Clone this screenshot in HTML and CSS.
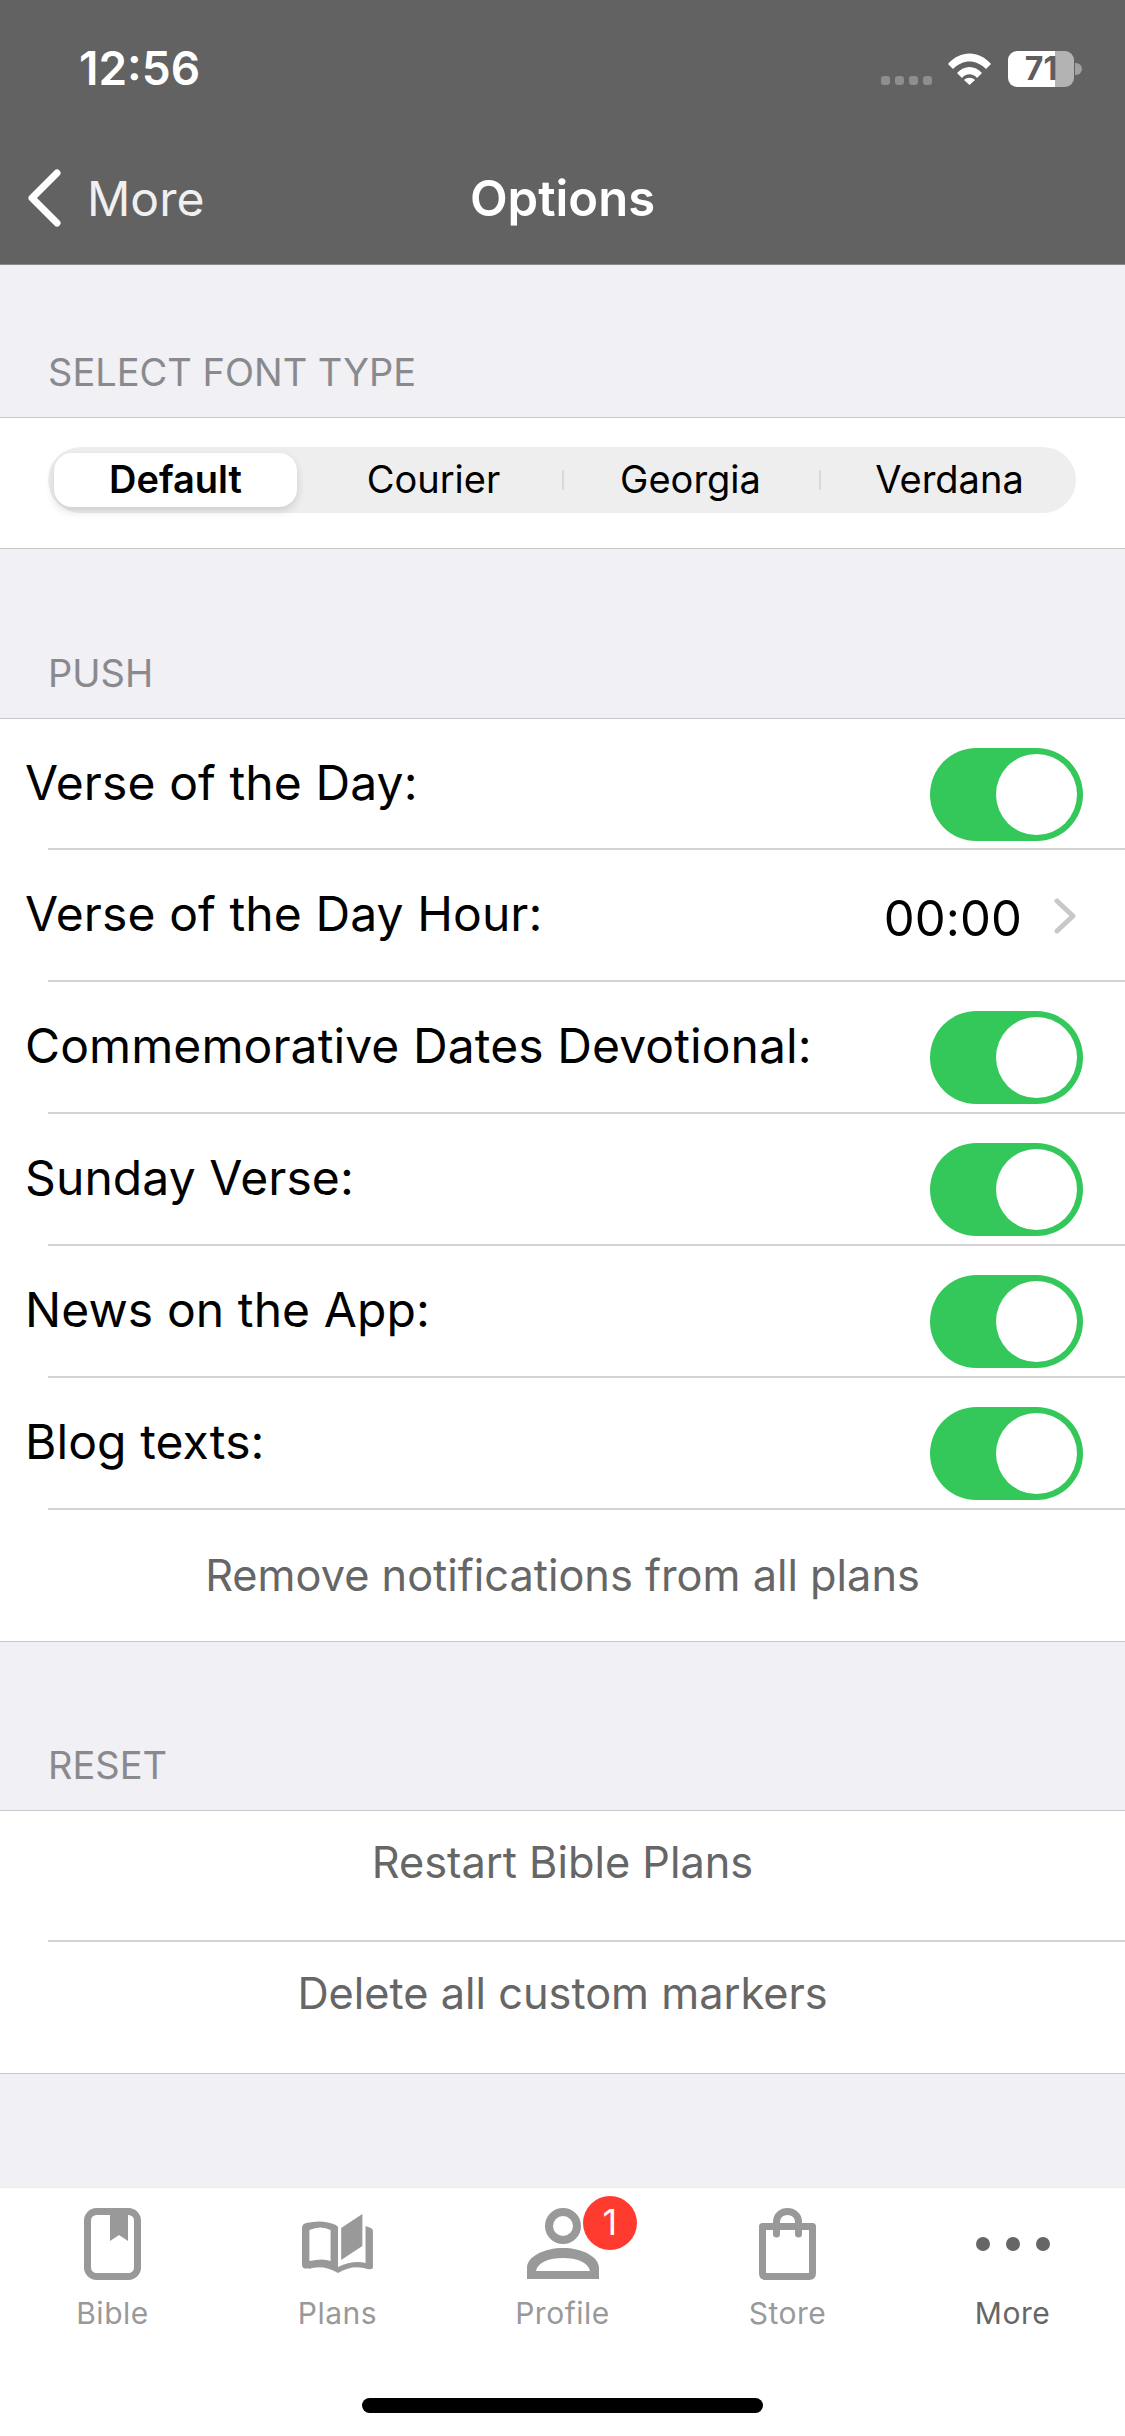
FILE: index.html
```html
<!DOCTYPE html>
<html lang="en">
<head>
    <meta charset="utf-8" />
    <title>Options</title>
    <link rel="stylesheet" href="styles.css">
</head>
<body>
    <div class="page">
        <header class="top">
            <div class="status-bar">
                <span class="clock">12:56</span>
                <div class="status-icons">
                    <div class="signal"><i></i><i></i><i></i><i></i></div>
                    <svg class="wifi" viewBox="0 0 45 33">
                        <path d="M1 12 C13 -2 32 -2 44 12 L39 17 C29 7 16 7 6 17 Z" fill="#fff"/>
                        <path d="M10 21 C17 13 28 13 35 21 L30 26 C26 21 19 21 15 26 Z" fill="#fff"/>
                        <path d="M17 28 C20 25 25 25 28 28 L22.500 33 Z" fill="#fff"/>
                    </svg>
                    <div class="battery"><span>71</span></div>
                    <div class="battery-nub"></div>
                </div>
            </div>
            <nav class="nav-bar">
                <div class="back">
                    <svg class="back-icon" viewBox="0 0 36 58"><path d="M31 4 L6 29 L31 54" fill="none" stroke="#fff" stroke-width="7" stroke-linecap="round" stroke-linejoin="round"/></svg>
                    <span>More</span>
                </div>
                <h1>Options</h1>
            </nav>
        </header>

        <main>
            <h2 class="section-title first">SELECT FONT TYPE</h2>
            <section class="group font-group">
                <div class="segments">
                    <div class="segment selected">Default</div>
                    <div class="segment">Courier</div>
                    <div class="segment divided">Georgia</div>
                    <div class="segment divided">Verdana</div>
                </div>
            </section>

            <h2 class="section-title">PUSH</h2>
            <section class="group">
                <div class="row"><span>Verse of the Day:</span><div class="switch"></div></div>
                <div class="row"><span>Verse of the Day Hour:</span>
                    <div class="value">
                        <span>00:00</span>
                        <svg class="chevron" viewBox="0 0 22 36"><path d="M3 3 L19 18 L3 33" fill="none" stroke="#c8c8c8" stroke-width="5" stroke-linecap="round" stroke-linejoin="round"/></svg>
                    </div>
                </div>
                <div class="row"><span>Commemorative Dates Devotional:</span><div class="switch"></div></div>
                <div class="row"><span>Sunday Verse:</span><div class="switch"></div></div>
                <div class="row"><span>News on the App:</span><div class="switch"></div></div>
                <div class="row"><span>Blog texts:</span><div class="switch"></div></div>
                <div class="row action">Remove notifications from all plans</div>
            </section>

            <h2 class="section-title reset-title">RESET</h2>
            <section class="group reset">
                <div class="row action">Restart Bible Plans</div>
                <div class="row action">Delete all custom markers</div>
            </section>
        </main>

        <footer class="tabs">
            <div class="tab-list">
                <div class="tab">
                    <svg class="tab-icon" width="57" height="72" viewBox="0 0 57 72">
                        <rect x="3.500" y="3.500" width="50" height="65" rx="9" fill="none" stroke="#999" stroke-width="7"/>
                        <path d="M26 3 H44 V33 L35 27 L26 33 Z" fill="#999"/>
                    </svg>
                    <span>Bible</span>
                </div>
                <div class="tab">
                    <svg class="tab-icon" width="72" height="72" viewBox="0 0 68 72" preserveAspectRatio="none">
                        <path fill-rule="evenodd" fill="#999" d="M0 20 Q0 16 4 15 Q20 11 32 17 L34 19 L34 61 Q18 54 6 60 Q0 62 0 56 Z M7 22 V53 Q20 50 27 53 V22 Q18 17 7 22 Z"/>
                        <path fill="#999" d="M37 20 L57 6 V38 L37 52 Z"/>
                        <path fill="#999" d="M60 18 L65 20 Q67 21 67 23 V59 Q67 62 62 61 Q48 56 34 65 Q20 56 6 61 L6 55 Q20 52 34 59 Q48 52 60 55 Z"/>
                    </svg>
                    <span>Plans</span>
                </div>
                <div class="tab">
                    <svg class="tab-icon" width="72" height="72" viewBox="0 0 72 72">
                        <circle cx="36" cy="18" r="14" fill="none" stroke="#999" stroke-width="8"/>
                        <path d="M0 71 V60 C0 48 18 40 36 40 C54 40 72 48 72 60 V71 Z M9 63 H63 C61 54 50 50 36 50 C22 50 11 54 9 63 Z" fill="#999" fill-rule="evenodd"/>
                    </svg>
                    <span>Profile</span>
                    <div class="badge">1</div>
                </div>
                <div class="tab">
                    <svg class="tab-icon" width="57" height="72" viewBox="0 0 57 72">
                        <path d="M3.500 18.500 H53.500 V65 Q53.500 68.500 50 68.500 H7 Q3.500 68.500 3.500 65 Z" fill="none" stroke="#999" stroke-width="7" stroke-linejoin="round"/>
                        <path d="M17.500 26 V14 C17.500 0 39.500 0 39.500 14 V26" fill="none" stroke="#999" stroke-width="7" stroke-linecap="round"/>
                    </svg>
                    <span>Store</span>
                </div>
                <div class="tab current">
                    <div class="tab-icon dots"><i></i><i></i><i></i></div>
                    <span>More</span>
                </div>
            </div>
            <div class="home-bar"></div>
        </footer>
    </div>
</body>
</html>
```

FILE: styles.css
```css
* {
    box-sizing: border-box;
    font-family: Inter, "Liberation Sans", Arial, sans-serif;
}

body {
    margin: 0;
    background: #f0f0f5;
}

.page {
    display: flex;
    flex-direction: column;
    width: 1125px;
    height: 2436px;
    overflow: hidden;
}

/* top bar */
.top {
    height: 265px;
    background: #626262;
    color: #fff;
    border-bottom: 1px solid #8a8a8a;
}

.status-bar {
    display: flex;
    justify-content: space-between;
    align-items: flex-start;
    height: 150px;
    padding: 46px 43px 0 79px;
}

.clock {
    font-size: 46px;
    font-weight: 600;
    line-height: 44px;
}

.status-icons {
    display: flex;
    align-items: flex-start;
    margin-top: 5px;
}

.signal {
    display: flex;
    gap: 5px;
    margin: 25px 15px 0 0;
}

.signal i {
    width: 9px;
    height: 9px;
    border-radius: 3px;
    background: #8e8e8e;
}

.wifi {
    width: 45px;
    height: 33px;
    margin-top: 1px;
}

.battery {
    width: 66px;
    height: 36px;
    margin-left: 16px;
    border-radius: 9px;
    background: linear-gradient(to right, #fff 47px, #b3b3b3 47px);
    color: #5e5e5e;
    font-size: 32px;
    font-weight: 700;
    line-height: 36px;
    text-align: center;
}

.battery-nub {
    width: 7px;
    height: 12px;
    margin: 12px 0 0 1px;
    border-radius: 0 6px 6px 0;
    background: #a0a0a0;
}

.nav-bar {
    position: relative;
    display: flex;
    justify-content: center;
    align-items: center;
    height: 96px;
}

.back {
    position: absolute;
    left: 26px;
    top: 0;
    bottom: 0;
    display: flex;
    align-items: center;
    gap: 25px;
    font-size: 48px;
    color: #f0f0f0;
}

.back-icon {
    width: 36px;
    height: 58px;
}

h1 {
    margin: 0;
    font-size: 49px;
    font-weight: 600;
}

/* list */
main {
    flex: 1;
}

.section-title {
    display: flex;
    align-items: flex-end;
    height: 169px;
    margin: 0;
    padding: 0 48px 23px;
    color: #8a8a8e;
    font-size: 38px;
    font-weight: 400;
    line-height: 44px;
}

.section-title.first {
    height: 152px;
}

.section-title.reset-title {
    height: 168px;
}

.group {
    background: #fff;
    border-top: 1px solid #c8c7cc;
    border-bottom: 1px solid #c8c7cc;
}

.font-group {
    height: 132px;
    padding: 29px 49px 0 48px;
}

.segments {
    display: flex;
    height: 66px;
    border-radius: 33px;
    background: #eeeeee;
}

.segment {
    position: relative;
    flex: 1;
    color: #000;
    font-size: 38px;
    line-height: 64px;
    text-align: center;
}

.segment:last-child {
    text-indent: 4px;
}

.segment.selected {
    flex: none;
    width: 243px;
    height: 54px;
    margin: 6px 8px 6px 6px;
    border-radius: 18px;
    background: #fff;
    box-shadow: 0 4px 10px rgba(0, 0, 0, 0.14);
    font-weight: 600;
    line-height: 52px;
}

.segment.divided::before {
    content: "";
    position: absolute;
    left: 0;
    top: 23px;
    width: 2px;
    height: 20px;
    background: #d9d9d9;
}

.row {
    display: flex;
    justify-content: space-between;
    align-items: center;
    position: relative;
    height: 132px;
    padding: 0 42px 4px 25px;
    color: #000;
    font-size: 48px;
    letter-spacing: 0.1px;
}

.row:first-child {
    height: 130px;
}

.row + .row::before {
    content: "";
    position: absolute;
    left: 48px;
    right: 0;
    top: -1px;
    height: 2px;
    background: #d2d2d4;
}

.switch {
    position: relative;
    width: 153px;
    height: 93px;
    margin-top: 25px;
    border-radius: 47px;
    background: #34c759;
}

.switch::after {
    content: "";
    position: absolute;
    right: 6px;
    top: 6px;
    width: 81px;
    height: 81px;
    border-radius: 50%;
    background: #fff;
}

.value {
    display: flex;
    align-items: center;
    gap: 32px;
    margin-top: 10px;
    padding-right: 7px;
    font-size: 49px;
}

.chevron {
    width: 22px;
    height: 36px;
    margin-top: -4px;
}

.row.action {
    justify-content: center;
    padding: 0;
    color: #666;
    font-size: 43.300px;
    letter-spacing: 0;
}

.reset .row.action {
    padding-bottom: 28px;
}

/* tab bar */
.tabs {
    height: 249px;
    background: #fff;
    border-top: 1px solid #ececec;
}

.tab-list {
    display: flex;
    padding-top: 20px;
}

.tab {
    position: relative;
    display: flex;
    flex: 1;
    flex-direction: column;
    align-items: center;
    gap: 15px;
    color: #999;
    font-size: 30px;
    letter-spacing: 0.5px;
    line-height: 36px;
}

.tab.current {
    color: #666;
}

.tab-icon {
    display: block;
}

.dots {
    display: flex;
    align-items: center;
    gap: 16px;
    height: 72px;
}

.dots i {
    width: 14px;
    height: 14px;
    border-radius: 50%;
    background: #666;
}

.badge {
    position: absolute;
    left: 133px;
    top: -12px;
    width: 54px;
    height: 54px;
    border-radius: 50%;
    background: #ff3b30;
    color: #fff;
    font-size: 36px;
    line-height: 52px;
    text-align: center;
}

.home-bar {
    width: 401px;
    height: 15px;
    margin: 67px auto 0;
    border-radius: 8px;
    background: #000;
}
```
